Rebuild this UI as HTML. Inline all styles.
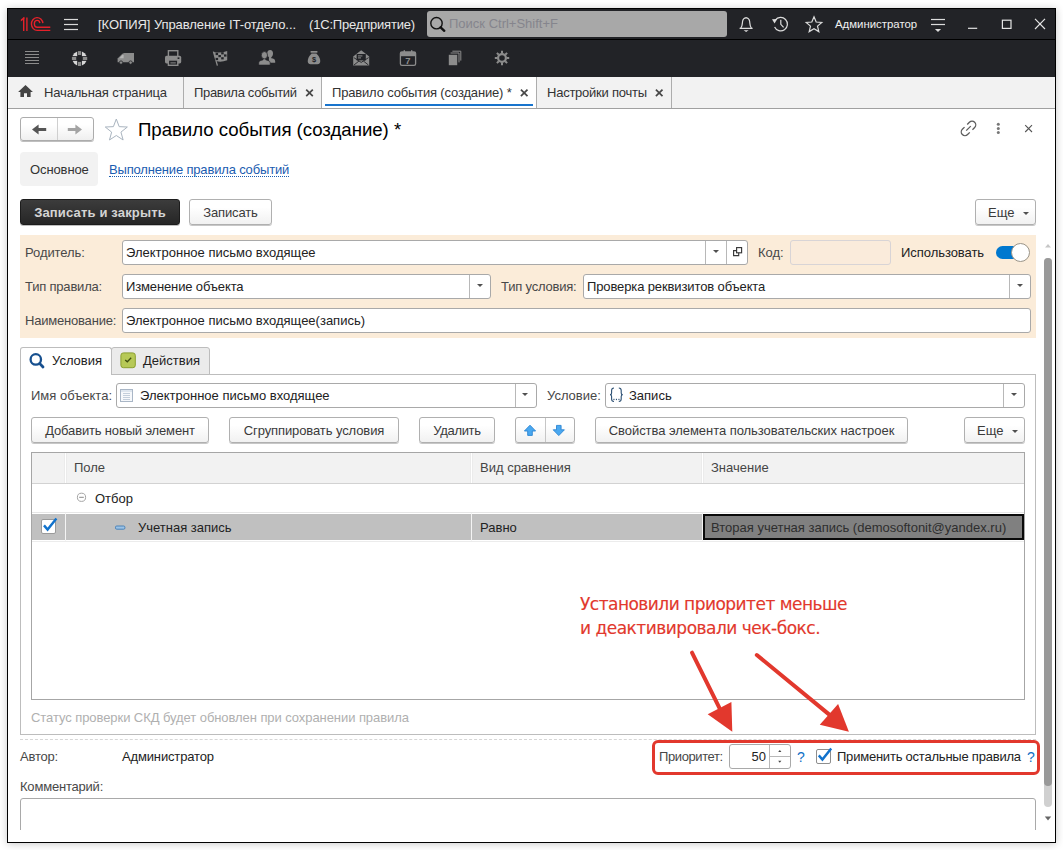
<!DOCTYPE html>
<html lang="ru">
<head>
<meta charset="utf-8">
<title>Правило события (создание)</title>
<style>
*{box-sizing:border-box;margin:0;padding:0}
html,body{width:1063px;height:850px;overflow:hidden;background:#fff}
body{font-family:"Liberation Sans",Arial,sans-serif;font-size:13px;color:#333;position:relative}
.win *{position:absolute;white-space:nowrap}
.win svg *{position:static}
.win{position:absolute;left:7px;top:8px;width:1049px;height:835px;background:#fff;border:1px solid #000;box-shadow:0 1px 8px rgba(0,0,0,.22)}
.page{left:-8px;top:-9px;width:1063px;height:850px}
.t{line-height:16px;height:16px}
.w{color:#fff}
.btn{height:26px;border:1px solid #b0b0b0;border-radius:3px;background:linear-gradient(#ffffff 30%,#f1f1f1);box-shadow:0 1px 0 rgba(0,0,0,.22);text-align:center;line-height:26px;color:#3a3a3a}
.fld{height:25px;border:1px solid #a9a9a9;border-radius:3px;background:#fff;line-height:23px;padding-left:3px;color:#222}
.lbl{line-height:16px;color:#484848;letter-spacing:-.2px}
.dd{width:1px;background:#b8b8b8}
.tri{width:0;height:0;border-left:3px solid transparent;border-right:3px solid transparent;border-top:3px solid #505050}
.x{font-weight:bold;font-size:13px;line-height:16px;color:#444}
</style>
</head>
<body>
<div class="win"><div class="page">
<!-- title bar -->
<div style="left:8px;top:9px;width:1047px;height:30px;background:#222327"></div>
<div style="left:8px;top:39px;width:1047px;height:1px;background:#000"></div>
<div style="left:8px;top:40px;width:1047px;height:37px;background:#222327"></div>
<div class="t" style="left:98px;top:17px;letter-spacing:-.07px;color:#e8e8e8">[КОПИЯ] Управление IT-отдело...</div>
<div class="t" style="left:309px;top:17px;letter-spacing:-.19px;color:#e8e8e8">(1С:Предприятие)</div>
<div style="left:427px;top:11px;width:300px;height:26px;background:#a8a8a8;border-radius:3px"></div>
<div class="t" style="left:449px;top:16px;color:#85858d">Поиск Ctrl+Shift+F</div>
<div class="t w" style="left:835px;top:16px;font-size:11.4px;color:#f0f0f0">Администратор</div>
<!-- tabs -->
<div style="left:8px;top:77px;width:1047px;height:32px;background:#f2f2f2;border-bottom:1px solid #a0a0a0"></div>
<div class="t" style="left:44px;top:85px;letter-spacing:-.16px">Начальная страница</div>
<div style="left:183px;top:77px;width:1px;height:31px;background:#adadad"></div>
<div class="t" style="left:194px;top:85px;letter-spacing:-.32px">Правила событий</div>
<div style="left:321px;top:77px;width:216px;height:31px;background:#fff;border-left:1px solid #adadad;border-right:1px solid #adadad"></div>
<div style="left:325px;top:104px;width:208px;height:2px;background:#1874cd"></div>
<div class="t" style="left:332px;top:85px;letter-spacing:-.17px">Правило события (создание) *</div>
<div class="t" style="left:547px;top:85px;letter-spacing:-.24px">Настройки почты</div>
<div style="left:671px;top:77px;width:1px;height:31px;background:#adadad"></div>
<!-- form header -->
<div style="left:20px;top:117px;width:74px;height:24px;border:1px solid #acacac;border-radius:3px;background:linear-gradient(#fff 30%,#efefef);box-shadow:0 1px 0 rgba(0,0,0,.25)"></div>
<div style="left:57px;top:118px;width:1px;height:22px;background:#cfcfcf"></div>
<div style="left:138px;top:118px;font-size:18.67px;line-height:24px;color:#000;letter-spacing:-.05px">Правило события (создание) *</div>
<div style="left:20px;top:152px;width:78px;height:34px;background:#f2f2f2;border-radius:4px"></div>
<div class="t" style="left:30px;top:162px;letter-spacing:-.11px">Основное</div>
<div class="t" style="left:109px;top:162px;height:15px;line-height:16px;color:#1a5cb0;border-bottom:1px dotted #1a5cb0;letter-spacing:-.17px">Выполнение правила событий</div>
<div style="left:20px;top:199px;width:160px;height:26px;border-radius:3px;background:linear-gradient(#3c3c3c,#262626);border:1px solid #1c1c1c;color:#d4d4d4;font-weight:bold;text-align:center;line-height:25px;letter-spacing:.16px;box-shadow:0 1px 0 rgba(0,0,0,.25)">Записать и закрыть</div>
<div class="btn" style="left:189px;top:199px;width:83px;letter-spacing:-.13px">Записать</div>
<div class="btn" style="left:975px;top:199px;width:61px;text-align:left;padding-left:12px">Еще</div>
<div class="tri" style="left:1023px;top:212px"></div>
<!-- orange panel -->
<div style="left:20px;top:235px;width:1016px;height:103px;background:#fbecd9"></div>
<div class="lbl" style="left:25px;top:245px;letter-spacing:-.08px">Родитель:</div>
<div class="fld" style="left:122px;top:240px;width:626px">Электронное письмо входящее</div>
<div class="dd" style="left:705px;top:241px;height:23px"></div>
<div class="dd" style="left:726px;top:241px;height:23px"></div>
<div class="tri" style="left:713px;top:250px"></div>
<div class="lbl" style="left:758px;top:245px;letter-spacing:0">Код:</div>
<div class="fld" style="left:790px;top:240px;width:101px;background:#faebdb;border-color:#d8d4d6"></div>
<div class="lbl" style="left:901px;top:245px;color:#222;letter-spacing:-.05px">Использовать</div>
<div style="left:996px;top:246px;width:32px;height:13px;border-radius:7px;background:#0078cf"></div>
<div style="left:1011px;top:243px;width:19px;height:19px;border-radius:10px;background:#fff;border:1px solid #9a9488"></div>
<div class="lbl" style="left:25px;top:279px">Тип правила:</div>
<div class="fld" style="left:122px;top:274px;width:369px;letter-spacing:-.13px">Изменение объекта</div>
<div class="dd" style="left:469px;top:275px;height:23px"></div>
<div class="tri" style="left:477px;top:284px"></div>
<div class="lbl" style="left:501px;top:279px">Тип условия:</div>
<div class="fld" style="left:583px;top:274px;width:448px;letter-spacing:-.12px">Проверка реквизитов объекта</div>
<div class="dd" style="left:1009px;top:275px;height:23px"></div>
<div class="tri" style="left:1017px;top:284px"></div>
<div class="lbl" style="left:25px;top:313px">Наименование:</div>
<div class="fld" style="left:122px;top:308px;width:909px">Электронное письмо входящее(запись)</div>
<!-- inner tabs -->
<div style="left:20px;top:374px;width:1016px;height:361px;border:1px solid #bdbdbd;background:#fff"></div>
<div style="left:111px;top:347px;width:99px;height:28px;border:1px solid #bdbdbd;background:#ebebeb;border-radius:3px 3px 0 0"></div>
<div style="left:20px;top:347px;width:92px;height:28px;border:1px solid #bdbdbd;border-bottom:none;background:#fff;border-radius:3px 3px 0 0"></div>
<div class="t" style="left:52px;top:353px;color:#222">Условия</div>
<div class="t" style="left:143px;top:353px;color:#222">Действия</div>
<div class="lbl" style="left:31px;top:388px;letter-spacing:0">Имя объекта:</div>
<div class="fld" style="left:116px;top:383px;width:421px;padding-left:23px;line-height:24px">Электронное письмо входящее</div>
<div class="dd" style="left:515px;top:384px;height:23px"></div>
<div class="tri" style="left:522px;top:393px"></div>
<div class="lbl" style="left:547px;top:388px;letter-spacing:0">Условие:</div>
<div class="fld" style="left:605px;top:383px;width:420px;padding-left:23px;line-height:24px">Запись</div>
<div class="dd" style="left:1003px;top:384px;height:23px"></div>
<div class="tri" style="left:1011px;top:393px"></div>
<div class="btn" style="left:31px;top:417px;width:178px;letter-spacing:-.16px">Добавить новый элемент</div>
<div class="btn" style="left:229px;top:417px;width:170px;letter-spacing:-.1px">Сгруппировать условия</div>
<div class="btn" style="left:419px;top:417px;width:76px;letter-spacing:-.3px">Удалить</div>
<div class="btn" style="left:515px;top:417px;width:60px"></div>
<div style="left:545px;top:418px;width:1px;height:24px;background:#c6c6c6"></div>
<div class="btn" style="left:595px;top:417px;width:313px;letter-spacing:-.05px">Свойства элемента пользовательских настроек</div>
<div class="btn" style="left:964px;top:417px;width:61px;text-align:left;padding-left:12px">Еще</div>
<div class="tri" style="left:1012px;top:430px"></div>
<!-- table -->
<div style="left:31px;top:452px;width:994px;height:248px;border:1px solid #a6a6a6;background:#fff"></div>
<div style="left:32px;top:453px;width:992px;height:31px;background:#f2f2f2;border-bottom:1px solid #d2d2d2"></div>
<div style="left:65px;top:453px;width:1px;height:30px;background:#fff;box-shadow:-1px 0 0 #ebebeb,1px 0 0 #ebebeb"></div>
<div style="left:471px;top:453px;width:1px;height:30px;background:#fff;box-shadow:-1px 0 0 #ebebeb,1px 0 0 #ebebeb"></div>
<div style="left:702px;top:453px;width:1px;height:30px;background:#fff;box-shadow:-1px 0 0 #ebebeb,1px 0 0 #ebebeb"></div>
<div class="t" style="left:74px;top:460px;color:#454545">Поле</div>
<div class="t" style="left:480px;top:460px;color:#454545">Вид сравнения</div>
<div class="t" style="left:711px;top:460px;color:#454545">Значение</div>
<div class="t" style="left:95px;top:491px;color:#222">Отбор</div>
<div style="left:32px;top:512px;width:992px;height:1px;background:#e6e6e6"></div>
<div style="left:32px;top:514px;width:992px;height:26px;background:#c0c0c0"></div>
<div style="left:32px;top:541px;width:992px;height:1px;background:#ececec"></div>
<div style="left:65px;top:513px;width:1px;height:28px;background:#f4f4f4"></div>
<div style="left:471px;top:513px;width:1px;height:28px;background:#f4f4f4"></div>
<div style="left:702px;top:513px;width:1px;height:28px;background:#f4f4f4"></div>
<div style="left:703px;top:514px;width:321px;height:26px;background:#808080;border:2px solid #0a0a0a"></div>
<div class="t" style="left:138px;top:520px;color:#222">Учетная запись</div>
<div class="t" style="left:480px;top:520px;color:#222">Равно</div>
<div class="t" style="left:711px;top:520px;color:#2e2e2e">Вторая учетная запись (demosoftonit@yandex.ru)</div>
<div style="left:41px;top:519px;width:15px;height:15px;background:#fff;border:1px solid #9a9a9a;border-radius:2px"></div>
<div class="t" style="left:31px;top:710px;color:#b0b0b0;letter-spacing:-.07px">Статус проверки СКД будет обновлен при сохранении правила</div>
<!-- bottom -->
<div style="left:20px;top:739px;width:1016px;height:0;border-top:1px dashed #d6d6d6"></div>
<div class="lbl" style="left:20px;top:749px">Автор:</div>
<div class="lbl" style="left:122px;top:749px;color:#222;letter-spacing:-.15px">Администратор</div>
<div class="lbl" style="left:659px;top:749px;letter-spacing:-.4px">Приоритет:</div>
<div class="fld" style="left:729px;top:744px;width:62px"></div>
<div class="dd" style="left:769px;top:745px;height:23px"></div>
<div style="left:770px;top:756px;width:20px;height:1px;background:#b8b8b8"></div>
<div class="t" style="left:729px;top:749px;width:37px;text-align:right;color:#222">50</div>
<div class="t" style="left:797px;top:749px;color:#0f6fc6;font-size:14px">?</div>
<div style="left:816px;top:749px;width:15px;height:15px;background:#fff;border:1px solid #8e8e8e;border-radius:2px"></div>
<div class="lbl" style="left:837px;top:749px;color:#222;letter-spacing:-.22px">Применить остальные правила</div>
<div class="t" style="left:1027px;top:749px;color:#0f6fc6;font-size:14px">?</div>
<div class="lbl" style="left:20px;top:779px;letter-spacing:-.2px">Комментарий:</div>
<div style="left:20px;top:798px;width:1016px;height:40px;border:1px solid #a9a9a9;border-radius:3px;background:#fff"></div>
<div style="left:8px;top:830px;width:1036px;height:12px;background:#fff"></div>
<!-- scrollbar -->
<div style="left:1044px;top:258px;width:8px;height:549px;background:#d0d0d0;border-radius:4px"></div>
<div style="left:1044px;top:258px;width:8px;height:528px;background:#999;border-radius:4px"></div>
<!-- annotation -->
<div style="left:652px;top:740px;width:388px;height:35px;border:3px solid #e2382d;border-radius:6px"></div>
<div style="left:580px;top:592px;font-family:'DejaVu Sans',sans-serif;font-size:17px;line-height:24px;color:#e2382d;letter-spacing:-.53px;-webkit-text-stroke:.15px #e2382d">Установили приоритет меньше</div>
<div style="left:580px;top:616px;font-family:'DejaVu Sans',sans-serif;font-size:17px;line-height:24px;color:#e2382d;letter-spacing:-.5px;-webkit-text-stroke:.15px #e2382d">и деактивировали чек-бокс.</div>
<svg style="left:0;top:0" width="1063" height="850" viewBox="0 0 1063 850">
<g fill="none" stroke="#e4212a" stroke-width="1.4"><path d="M23.7 17.4V31M26.9 17.4V31"/><path d="M42.9 23.2A5.75 6.4 0 1 0 37.2 30.4H50.3"/><path d="M39.9 23.2A2.8 3.4 0 1 0 37.1 27.2H50.3"/></g><path d="M24.4 16.8L20.8 19.6V21.4L24.4 19z" fill="#e4212a"/>
<g fill="#dadada"><rect x="64" y="18.9" width="14" height="1.2"/><rect x="64" y="23.9" width="14" height="1.2"/><rect x="64" y="28.9" width="14" height="1.2"/></g>
<circle cx="436.5" cy="23.2" r="5.7" fill="none" stroke="#111" stroke-width="1.4"/><path d="M440.6 27.4L444.3 30.8" stroke="#111" stroke-width="2.4" stroke-linecap="round"/>
<g fill="none" stroke="#dcdcdc" stroke-width="1.2" stroke-linejoin="round"><path d="M739.6 28.4H752.6M740.6 28.4C742.6 26 742.3 23.5 742.5 21.8C742.8 19.2 744 17.8 746.1 17.8C748.2 17.8 749.4 19.2 749.7 21.8C749.9 23.5 749.6 26 751.6 28.4"/><path d="M746.1 17.8V16.9"/></g><path d="M743.6 30.2H748.6L746.1 31.9z" fill="#dcdcdc"/>
<g fill="none" stroke="#dcdcdc" stroke-width="1.2"><path d="M775.3 20.2A6.7 6.7 0 1 1 774.6 26.9"/><path d="M780.8 19.8V24.3L783.6 27.4"/></g><path d="M772 19.3L777.2 19.1L774.6 23.4z" fill="#dcdcdc"/>
<polygon points="814.00,16.80 816.17,22.01 821.80,22.47 817.52,26.14 818.82,31.63 814.00,28.70 809.18,31.63 810.48,26.14 806.20,22.47 811.83,22.01" fill="none" stroke="#dcdcdc" stroke-width="1.2" stroke-linejoin="miter"/>
<g fill="#dcdcdc"><rect x="931" y="18.9" width="14" height="1.2"/><rect x="931" y="23.9" width="14" height="1.2"/><path d="M934.9 29H941.1L938 32.1z"/></g>
<g fill="none" stroke="#e4e4e4" stroke-width="1.2"><path d="M968 28.3H977.2"/><rect x="1002.4" y="20.2" width="8.6" height="8.2"/><path d="M1035 18.9L1045 29M1045 18.9L1035 29"/></g>
<g fill="#8c8c8c">
<rect x="25" y="51" width="14" height="1"/>
<rect x="25" y="54" width="14" height="1"/>
<rect x="25" y="57" width="14" height="1"/>
<rect x="25" y="60" width="14" height="1"/>
<rect x="25" y="63" width="14" height="1"/>
</g>
<g><circle cx="79.55" cy="58.5" r="7.3" fill="#d6d6d6"/><rect x="77.2" y="50" width="4.7" height="17" fill="#222327"/><rect x="71" y="56.15" width="17" height="4.7" fill="#222327"/><g fill="#8c8c8c"><rect x="78" y="51.1" width="3.1" height="3.9"/><rect x="78" y="61.9" width="3.1" height="4.1"/><rect x="71.9" y="57" width="4.3" height="3"/><rect x="82.8" y="57" width="4.4" height="3"/></g></g>
<path d="M124.5 53H134V62.2H117.6V58.6L121.6 54.4Q122.6 53.4 124.5 53z" fill="#8c8c8c"/><path d="M119.4 58.2L122.3 55H123.6V58.2z" fill="#b5b5b5"/><circle cx="121" cy="62.6" r="1.7" fill="#8c8c8c" stroke="#222327" stroke-width=".8"/><circle cx="130.6" cy="62.6" r="1.7" fill="#8c8c8c" stroke="#222327" stroke-width=".8"/>
<g><rect x="168.4" y="50.7" width="9.4" height="6" fill="#222327" stroke="#8c8c8c" stroke-width="1.4"/><rect x="165" y="55.8" width="16.2" height="7.6" rx="1.6" fill="#8c8c8c"/><rect x="168.4" y="60" width="9.4" height="5.3" fill="#222327" stroke="#8c8c8c" stroke-width="1.4"/><rect x="170.4" y="62.4" width="5.4" height="1" fill="#8c8c8c"/><rect x="177.6" y="57.4" width="1.8" height="1.6" fill="#222327"/></g>
<g><path d="M213.4 51.6L217.4 65.6" stroke="#8c8c8c" stroke-width="1.3"/><path d="M213.6 52Q220 53.6 227.2 51V60.2Q221 62.6 216.2 61z" fill="#8c8c8c"/><g fill="#222327"><rect x="215.6" y="52.9" width="2.5" height="2.2"/><rect x="221.2" y="52.2" width="2.5" height="2.2"/><rect x="218.4" y="55.0" width="2.5" height="2.2"/><rect x="224.0" y="54.4" width="2.5" height="2.2"/><rect x="215.6" y="57.9" width="2.5" height="2.2"/><rect x="221.2" y="57.2" width="2.5" height="2.2"/></g></g>
<g fill="#8c8c8c"><ellipse cx="270.1" cy="53.6" rx="2.9" ry="3.7"/><path d="M268.9 56H271.3V58.2L273 58.6Q275.2 59.2 275.2 61.2V62.8H268.9z"/><g stroke="#222327" stroke-width=".7"><path d="M258.7 65.1V62.8Q258.7 60.9 260.9 60.4L263.1 59.8V57.6H265.7V59.8L267.9 60.4Q270.2 60.9 270.2 62.8V65.1z"/><ellipse cx="264.4" cy="55.2" rx="3.1" ry="3.6"/></g></g>
<g fill="#8c8c8c"><rect x="310.6" y="51" width="6.8" height="1.7"/><path d="M311.6 53.6H316.4Q320.4 57.6 320.2 61.6Q320 64.2 317.4 64.2H310.6Q308 64.2 307.8 61.6Q307.6 57.6 311.6 53.6z"/></g><text x="314" y="62.4" font-size="7.5" font-weight="bold" text-anchor="middle" fill="#222327" font-family="Liberation Sans,sans-serif">$</text>
<g><path d="M353.2 56.6L361.2 50.2L369.2 56.6V65.6H353.2z" fill="#8c8c8c"/><rect x="356.6" y="54" width="9.2" height="6.4" fill="#222327"/><rect x="358" y="55.4" width="4.4" height="1" fill="#8c8c8c"/><rect x="358" y="57.4" width="3" height="1" fill="#8c8c8c"/><path d="M353.8 57.6L361.2 62.4L368.6 57.6M354 65L359 61M368.4 65L363.4 61" stroke="#222327" stroke-width=".9" fill="none"/></g>
<g><rect x="400.4" y="52" width="15.2" height="13.4" rx="1.6" fill="none" stroke="#8c8c8c" stroke-width="1.3"/><rect x="400.4" y="52" width="15.2" height="4.2" fill="#8c8c8c"/><rect x="403.6" y="50.2" width="1.4" height="3.6" fill="#8c8c8c"/><rect x="411" y="50.2" width="1.4" height="3.6" fill="#8c8c8c"/><text x="408" y="64.2" font-size="9.5" font-weight="bold" text-anchor="middle" fill="#8c8c8c" font-family="Liberation Sans,sans-serif">7</text></g>
<g fill="none" stroke="#8c8c8c" stroke-width="1"><path d="M452.4 51.2H460.8V60.6"/><path d="M450.6 53H459V62.4"/></g><rect x="448.8" y="54.8" width="8.4" height="10.4" fill="#8c8c8c"/>
<g fill="none" stroke="#8c8c8c"><circle cx="502" cy="58" r="3.9" stroke-width="2.2"/><path d="M506.60 58.00L509.20 58.00M505.25 61.25L507.09 63.09M502.00 62.60L502.00 65.20M498.75 61.25L496.91 63.09M497.40 58.00L494.80 58.00M498.75 54.75L496.91 52.91M502.00 53.40L502.00 50.80M505.25 54.75L507.09 52.91" stroke-width="2"/></g>
<path d="M25.5 85L32.9 92H30.6V97H27V93.2H24V97H20.4V92H18.1z" fill="#444"/>
<path d="M306.2 89.6l6.6 6.6m0 -6.6l-6.6 6.6" stroke="#484848" stroke-width="1.7" fill="none"/>
<path d="M520.9 89.6l6.6 6.6m0 -6.6l-6.6 6.6" stroke="#484848" stroke-width="1.7" fill="none"/>
<path d="M655.9 89.6l6.6 6.6m0 -6.6l-6.6 6.6" stroke="#484848" stroke-width="1.7" fill="none"/>
<path d="M32 129.5L38.6 124.4V128H46.2V131H38.6V134.6z" fill="#555"/>
<path d="M82 129.5L75.4 124.4V128H67.8V131H75.4V134.6z" fill="#a3a3a3"/>
<polygon points="116.30,119.00 119.18,126.64 127.33,127.02 120.96,132.11 123.12,139.98 116.30,135.50 109.48,139.98 111.64,132.11 105.27,127.02 113.42,126.64" fill="#fff" stroke="#a9b4bf" stroke-width="1"/>
<g transform="translate(968.5 128.4) rotate(-45)" fill="none" stroke="#5c5c5c" stroke-width="1.3"><path d="M1.9 -3.7H5A3.7 3.7 0 0 1 5 3.7H1.9"/><path d="M-1.9 3.7H-5A3.7 3.7 0 0 1 -5 -3.7H-1.9"/><path d="M-3.2 0H3.2"/></g>
<g fill="#777"><circle cx="998.3" cy="124.3" r="1.5"/><circle cx="998.3" cy="128.4" r="1.5"/><circle cx="998.3" cy="132.5" r="1.5"/></g>
<path d="M1025.2 125.2L1032 132M1032 125.2L1025.2 132" stroke="#555" stroke-width="1.1" fill="none"/>
<g fill="none" stroke="#383838" stroke-width="1.15"><rect x="736.6" y="247.6" width="5" height="5.2"/><path d="M736.6 250.6H733.6V255.6H738.7V252.8"/></g>
<path d="M1045 247.5H1051L1048 243.9z" fill="#c6c6c6"/><path d="M1044.8 816.6H1051.2L1048 820.4z" fill="#666"/>
<circle cx="35.8" cy="359.4" r="5.2" fill="none" stroke="#17508f" stroke-width="2.3"/><path d="M39.8 363.6L43 367" stroke="#17508f" stroke-width="2.8" stroke-linecap="round"/>
<rect x="120.9" y="352.9" width="14.4" height="14.8" rx="2.5" fill="#b7c957" stroke="#8a9f2e" stroke-width="1"/><path d="M125.2 359.9L127.3 361.8L131.2 357.8" fill="none" stroke="#3f4f10" stroke-width="1.3"/>
<rect x="120.5" y="389.5" width="12" height="12" fill="#f6f8fb" stroke="#a9b6c6" stroke-width="1"/><path d="M123 393.5H130M123 395.5H130M123 397.5H130M123 399.5H130" stroke="#c3cedb" stroke-width="1"/><rect x="121" y="390" width="11" height="2" fill="#dde5ee"/>
<g fill="none" stroke="#2b4f73" stroke-width="1.1"><path d="M614 388Q611.6 388 611.6 390.4V393Q611.6 394.7 610 394.7Q611.6 394.7 611.6 396.4V399.1Q611.6 401.5 614 401.5"/><path d="M618.8 388Q621.2 388 621.2 390.4V393Q621.2 394.7 622.8 394.7Q621.2 394.7 621.2 396.4V399.1Q621.2 401.5 618.8 401.5"/></g><g fill="#2b4f73"><rect x="613.4" y="398.8" width="1.1" height="1.3"/><rect x="615.9" y="398.8" width="1.1" height="1.3"/><rect x="618.4" y="398.8" width="1.1" height="1.3"/></g>
<path d="M530 425.2L535.6 431H532.3V435.4H527.7V431H524.4z" fill="#4aa8f0" stroke="#2a84d2" stroke-width=".9" stroke-linejoin="round"/>
<path d="M558.8 435.6L564.4 429.8H561.1V425.4H556.5V429.8H553.2z" fill="#4aa8f0" stroke="#2a84d2" stroke-width=".9" stroke-linejoin="round"/>
<circle cx="81.5" cy="497.3" r="4.1" fill="#fff" stroke="#a4a4a4" stroke-width="1"/><path d="M79.2 497.3H83.8" stroke="#8a8a8a" stroke-width="1"/>
<rect x="115.5" y="526" width="9.4" height="3.2" rx="1.2" fill="#9cc3e6" stroke="#4b83b8" stroke-width="1"/>
<path d="M44 525.4L47.6 529.6L56.4 518.6" fill="none" stroke="#1172cc" stroke-width="2.4"/>
<path d="M818.8 755.4L822.4 759.6L831.2 748.4" fill="none" stroke="#1172cc" stroke-width="2.4"/>
<path d="M778.2 752H781.4L779.8 750z" fill="#444"/><path d="M778.2 760.8H781.4L779.8 762.8z" fill="#444"/>
<path d="M692.0 652.7L719.5 708.2" stroke="#e2382d" stroke-width="4" stroke-linecap="round"/><polygon points="732.3,731.8 707.7,714.3 731.4,702.1" fill="#e2382d"/>
<path d="M756.8 655.0L829.0 714.4" stroke="#e2382d" stroke-width="4" stroke-linecap="round"/><polygon points="848.9,731.8 819.8,724.7 838.1,704.1" fill="#e2382d"/>
</svg>
</div></div>
</body>
</html>
